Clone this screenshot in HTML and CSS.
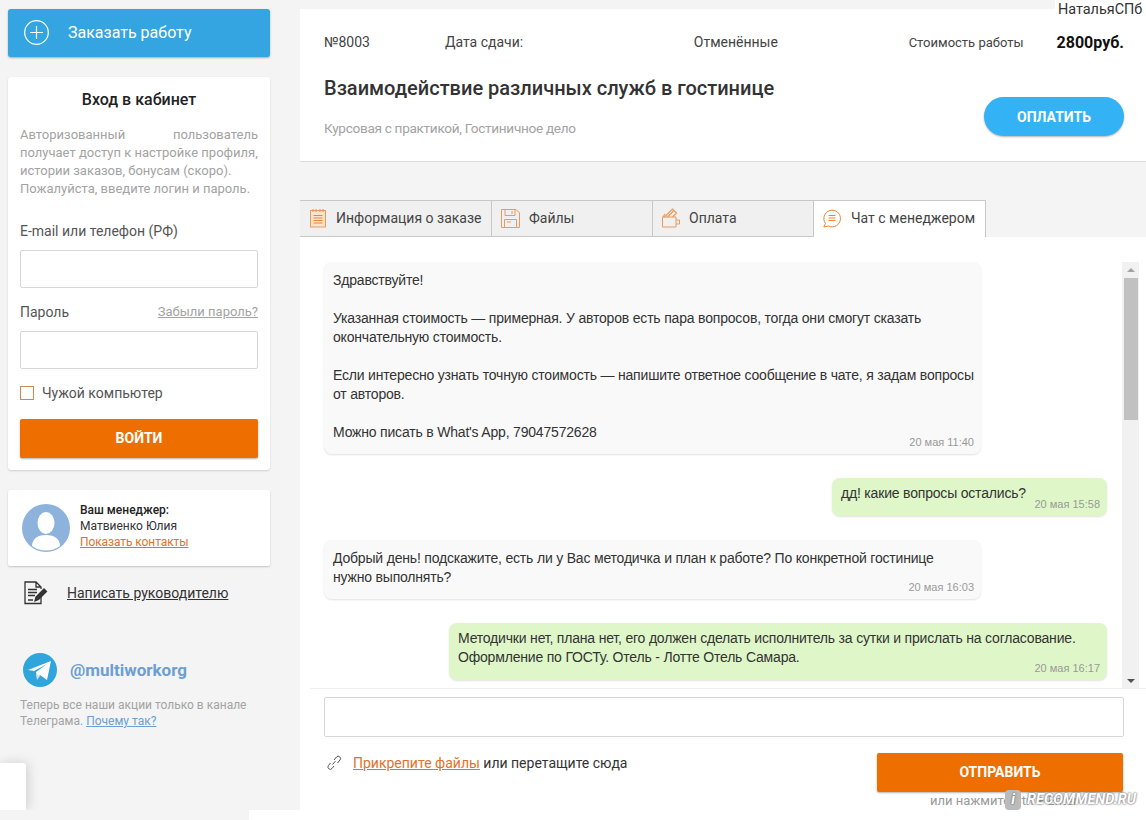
FILE: index.html
```html
<!DOCTYPE html>
<html lang="ru">
<head>
<meta charset="utf-8">
<title>Заказ №8003</title>
<link rel="stylesheet" href="styles.css">
</head>
<body>
<div class="page">

<div class="sidebar">
	<a class="order_btn">
		<svg width="25" height="25" viewBox="0 0 25 25" fill="none" stroke="#fff" stroke-width="1.2"><circle cx="12.500" cy="12.500" r="11.800"/><path d="M12.500 6v13M6 12.500h13"/></svg>
		<span>Заказать работу</span>
	</a>

	<div class="login_box">
		<div class="login_title">Вход в кабинет</div>
		<p class="login_text">Авторизованный пользователь получает доступ к настройке профиля,<br>истории заказов, бонусам (скоро).<br>Пожалуйста, введите логин и пароль.</p>
		<div class="field_label">E-mail или телефон (РФ)</div>
		<div class="field_input"></div>
		<div class="field_label pass_row"><span>Пароль</span><a class="forgot">Забыли пароль?</a></div>
		<div class="field_input"></div>
		<div class="check_row"><span class="check_box"></span>Чужой компьютер</div>
		<a class="login_btn">ВОЙТИ</a>
	</div>

	<div class="manager_box">
		<svg class="avatar" width="48" height="48" viewBox="0 0 48 48"><circle cx="24" cy="24" r="24" fill="#8db3dc"/><ellipse cx="24" cy="19" rx="8.500" ry="11" fill="#fff"/><path d="M10 42c0-8 7-11 14-11s14 3 14 11a24 24 0 0 1-28 0z" fill="#fff"/></svg>
		<div class="manager_text">
			<b>Ваш менеджер:</b>
			<div>Матвиенко Юлия</div>
			<a class="contacts">Показать контакты</a>
		</div>
	</div>

	<div class="write_row">
		<svg width="26" height="26" viewBox="0 0 26 26" fill="none" stroke="#333" stroke-width="1.300"><path d="M18 16v7.500H2V2h11l5 5v2M13 2v5h5M5 9.500h9M5 12.500h9M5 15.500h7M5 20h5"/><path d="M12 21l1-4 8-8 2.500 2.500-8 8z" fill="#333"/></svg>
		<a>Написать руководителю</a>
	</div>

	<div class="tg_row">
		<svg width="34" height="34" viewBox="0 0 34 34"><circle cx="17" cy="17" r="17" fill="#2fa5dc"/><path d="M5 17l23-9-4 19-7-5-3 3-1-6 11-8-13 7z" fill="#fff"/><path d="M13 21l1 6 3-4z" fill="#c8dfee"/></svg>
		<span class="tg_name">@multiworkorg</span>
	</div>
	<p class="tg_text">Теперь все наши акции только в канале Телеграма. <a>Почему так?</a></p>
</div>

<div class="content">
	<div class="order_head">
		<div class="head_top">
			<span class="order_num">№8003</span>
			<span class="order_date">Дата сдачи:</span>
			<span class="order_status">Отменённые</span>
			<span class="price_label">Стоимость работы</span>
			<span class="price">2800руб.</span>
		</div>
		<div class="head_bottom">
			<div>
				<div class="order_title">Взаимодействие различных служб в гостинице</div>
				<div class="order_type">Курсовая с практикой, Гостиничное дело</div>
			</div>
			<a class="pay_btn">ОПЛАТИТЬ</a>
		</div>
	</div>

	<div class="tabs">
		<div class="tab tab_info">
			<svg width="18" height="20" viewBox="0 0 18 20" fill="#fbe3cc" stroke="#ec9a5c"><rect x="1.500" y="2.500" width="15" height="16.500"/><path d="M4 1v3M7 1v3M11 1v3M14 1v3" stroke-width="1.200"/><path d="M4.500 7.500h9M4.500 10h9M4.500 12.500h9M4.500 15h9" stroke="#e8853a"/></svg>
			Информация о заказе
		</div>
		<div class="tab tab_files">
			<svg width="19" height="20" viewBox="0 0 19 20" fill="none" stroke="#ec9a5c"><path d="M.5 1.500h14.500l3.500 3.500v14.500H.5z"/><path d="M4 1.500v6h10v-6M11 3v3M3.500 19.500v-8h12v8M6 14h4"/></svg>
			Файлы
		</div>
		<div class="tab tab_pay">
			<svg width="18" height="20" viewBox="0 0 18 20" fill="none" stroke="#ec9a5c"><path d="M.5 9h13.500v10H.5zM14 12h3.500v4H14"/><path d="M2.500 9l8-8 4 4-4 4M5.500 9l6-6M1 9l2-3" stroke-width="1.200"/></svg>
			Оплата
		</div>
		<div class="tab tab_chat">
			<svg width="18" height="20" viewBox="0 0 18 20" fill="none" stroke="#e8853a"><path d="M2.500 15.500a8.300 8.300 0 1 1 3 2.500L.8 19z"/><path d="M5.500 7.500h7M5.500 10h7M5.500 12.500h7"/></svg>
			Чат с менеджером
		</div>
	</div>

	<div class="chat_panel">
		<div class="chat_wrap">
			<div class="messages">
				<div class="msg msg_in msg_first">
					<p>Здравствуйте!</p>
					<p>Указанная стоимость — примерная. У авторов есть пара вопросов, тогда они смогут сказать окончательную стоимость.</p>
					<p>Если интересно узнать точную стоимость — напишите ответное сообщение в чате, я задам вопросы от авторов.</p>
					<p>Можно писать в What's App, 79047572628</p>
					<span class="msg_time">20 мая 11:40</span>
				</div>
				<div class="msg msg_out msg_short">
					<p>дд! какие вопросы остались?</p>
					<span class="msg_time">20 мая 15:58</span>
				</div>
				<div class="msg msg_in msg_third">
					<p>Добрый день! подскажите, есть ли у Вас методичка и план к работе? По конкретной гостинице нужно выполнять?</p>
					<span class="msg_time">20 мая 16:03</span>
				</div>
				<div class="msg msg_out msg_fourth">
					<p>Методички нет, плана нет, его должен сделать исполнитель за сутки и прислать на согласование. Оформление по ГОСТу. Отель - Лотте Отель Самара.</p>
					<span class="msg_time">20 мая 16:17</span>
				</div>
			</div>
			<div class="scrollbar">
				<span class="arrow_up"></span>
				<div class="scroll_track"><div class="scroll_thumb"></div></div>
				<span class="arrow_down"></span>
			</div>
		</div>

		<div class="send_area">
			<div class="send_input"></div>
			<div class="send_row">
				<div class="attach">
					<svg width="16" height="16" viewBox="0 0 16 16" fill="none" stroke="#555"><path d="M6.500 9.500l3-3.500M4.500 8l-2 2.500a2.300 2.300 0 0 0 3.500 3l2-2.500M8 5l2.500-3a2.300 2.300 0 0 1 3.500 3l-2.500 3"/></svg>
					<span><a>Прикрепите файлы</a> или перетащите сюда</span>
				</div>
				<div class="send_right">
					<a class="send_btn">ОТПРАВИТЬ</a>
					<div class="send_hint">или нажмите Ctrl + Enter</div>
				</div>
			</div>
		</div>
	</div>
</div>
</div>

<div class="user_name">НатальяСПб</div>
<div class="corner_left"></div>
<div class="corner_strip"></div>
<div class="watermark"><span class="wm_badge">i</span>RECOMMEND.RU</div>
</body>
</html>
```

FILE: styles.css
```css
html, body {
	height: 820px;
	overflow: hidden;
}

body {
	margin: 0;
	background: #f4f4f4;
	color: #333;
	font-family: Roboto, Arial, sans-serif;
	font-size: 14px;
	position: relative;
}

a {
	cursor: pointer;
}

.page {
	display: flex;
	align-items: flex-start;
	padding-top: 9px;
}

.sidebar {
	width: 262px;
	margin-left: 8px;
	flex-shrink: 0;
}

.order_btn {
	display: flex;
	align-items: center;
	gap: 19px;
	height: 48px;
	box-sizing: border-box;
	padding: 0 0 1px 16px;
	background: #34a5e0;
	border-radius: 3px;
	box-shadow: 0 1px 2px rgba(0, 0, 0, 0.3);
	color: #fff;
	font-size: 16px;
}

.login_box {
	margin-top: 20px;
	padding: 13px 12px 12px;
	height: 393px;
	box-sizing: border-box;
	background: #fff;
	border-radius: 3px;
	box-shadow: 0 1px 2px rgba(0, 0, 0, 0.15);
}

.login_title {
	text-align: center;
	font-size: 16px;
	font-weight: 500;
	line-height: 20px;
	color: #222;
}

.login_text {
	margin: 16px 0 0;
	font-size: 13px;
	line-height: 18px;
	color: #a3a3a3;
	text-align: justify;
}

.field_label {
	margin-top: 23px;
	font-size: 14px;
	line-height: 20px;
	color: #555;
}

.pass_row {
	display: flex;
	justify-content: space-between;
	align-items: center;
	margin-top: 14px;
}

.forgot {
	font-size: 13px;
	color: #a3a3a3;
	text-decoration: underline;
}

.field_input {
	height: 36px;
	margin-top: 9px;
	background: #fff;
	border: 1px solid #d8d8d8;
	border-radius: 2px;
}

.check_row {
	display: flex;
	align-items: center;
	gap: 8px;
	margin-top: 15px;
	line-height: 18px;
	color: #555;
}

.check_box {
	width: 12px;
	height: 12px;
	border: 1px solid #c98a50;
}

.login_btn {
	display: block;
	margin-top: 17px;
	height: 39px;
	line-height: 38px;
	background: #ee6f00;
	border-radius: 2px;
	box-shadow: 0 1px 2px rgba(0, 0, 0, 0.3);
	color: #fff;
	font-weight: 700;
	text-align: center;
}

.manager_box {
	display: flex;
	align-items: center;
	gap: 10px;
	margin-top: 20px;
	height: 76px;
	padding-left: 14px;
	background: #fff;
	border-radius: 2px;
	box-shadow: 0 1px 2px rgba(0, 0, 0, 0.2);
}

.manager_text {
	padding-bottom: 4px;
	font-size: 12px;
	line-height: 16px;
	color: #333;
}

.manager_text b {
	font-weight: 500;
	color: #222;
}

.contacts {
	color: #e0722a;
	letter-spacing: -0.1px;
	text-decoration: underline;
}

.write_row {
	display: flex;
	align-items: center;
	gap: 18px;
	margin-top: 14px;
	padding-left: 15px;
}

.write_row a {
	color: #333;
	text-decoration: underline;
}

.tg_row {
	display: flex;
	align-items: center;
	gap: 13px;
	margin-top: 47px;
	padding-left: 15px;
}

.tg_name {
	font-size: 17px;
	font-weight: 700;
	color: #6d9fd2;
}

.tg_text {
	margin: 10px 0 0 12px;
	width: 240px;
	font-size: 12px;
	line-height: 16px;
	color: #a3a3a3;
}

.tg_text a {
	color: #6d9fd2;
	text-decoration: underline;
}

.content {
	width: 846px;
	margin-left: 30px;
	flex-shrink: 0;
}

.order_head {
	height: 153px;
	box-sizing: border-box;
	padding: 23px 22px 0 24px;
	background: #fff;
	border-bottom: 1px solid #ddd;
}

.head_top {
	display: flex;
	align-items: center;
	height: 20px;
	color: #444;
}

.order_num {
	width: 121px;
}

.order_date {
	width: 249px;
}

.order_status {
	width: 215px;
}

.price_label {
	width: 148px;
	font-size: 13px;
}

.price {
	font-size: 16px;
	font-weight: 700;
	color: #111;
}

.head_bottom {
	display: flex;
	justify-content: space-between;
	margin-top: 23px;
}

.order_title {
	font-size: 20px;
	font-weight: 500;
	line-height: 26px;
	color: #333;
}

.order_type {
	margin-top: 19px;
	font-size: 13.600px;
	letter-spacing: -0.3px;
	line-height: 16px;
	color: #a3a3a3;
}

.pay_btn {
	width: 140px;
	height: 39px;
	margin-top: 22px;
	line-height: 41px;
	background: #33b3f5;
	border-radius: 20px;
	box-shadow: 0 1px 2px rgba(0, 0, 0, 0.3);
	color: #fff;
	font-weight: 700;
	text-align: center;
}

.tabs {
	display: flex;
	height: 37px;
	margin-top: 38px;
}

.tab {
	display: flex;
	align-items: center;
	gap: 9px;
	box-sizing: border-box;
	padding: 0 0 2px 9px;
	background: #f0f0f0;
	border: 1px solid #c8c8c8;
	border-left: 0;
	color: #444;
}

.tab_info {
	width: 192px;
}

.tab_files {
	width: 161px;
}

.tab_pay {
	width: 161px;
}

.tab_chat {
	width: 172px;
	gap: 10px;
	background: #fff;
	border-bottom: 0;
}

.chat_panel {
	height: 583px;
	background: #fff;
}

.chat_wrap {
	display: flex;
	justify-content: space-between;
	height: 452px;
	margin-left: 10px;
	border-bottom: 1px solid #eee;
	box-sizing: border-box;
	overflow: hidden;
}

.messages {
	width: 783px;
	margin-left: 14px;
	padding-top: 25px;
}

.msg {
	box-sizing: border-box;
	padding: 9px;
	border-radius: 8px;
	font-family: "Liberation Sans", Arial, sans-serif;
	font-size: 14px;
	letter-spacing: -0.19px;
	line-height: 19px;
	color: #333;
	position: relative;
}

.msg p {
	margin: 0 0 19px;
}

.msg p:last-of-type {
	margin-bottom: 0;
}

.msg_in {
	background: #f9f9f9;
	box-shadow: 0 1px 2px rgba(0, 0, 0, 0.12);
}

.msg_out {
	padding-top: 6px;
	background: #dff7c8;
	box-shadow: 0 1px 2px rgba(0, 0, 0, 0.12);
	margin-left: auto;
}

.msg_first {
	width: 657px;
	height: 192px;
	padding-right: 6px;
}

.msg_short {
	width: 275px;
	height: 38px;
	margin-top: 24px;
}

.msg_third {
	width: 657px;
	height: 59px;
	margin-top: 24px;
}

.msg_fourth {
	width: 658px;
	height: 57px;
	margin-top: 24px;
}

.msg_time {
	position: absolute;
	right: 7px;
	bottom: 5px;
	font-size: 11px;
	letter-spacing: 0;
	line-height: 14px;
	color: #999;
	white-space: nowrap;
}

.scrollbar {
	display: flex;
	flex-direction: column;
	align-items: center;
	width: 17px;
	height: 427px;
	margin: 25px 7px 0 0;
	background: #f1f1f1;
}

.scroll_track {
	flex: 1;
	width: 14px;
}

.scroll_thumb {
	height: 142px;
	background: #c1c1c1;
}

.arrow_up, .arrow_down {
	width: 0;
	height: 0;
	margin: 6px 0;
	border-left: 4px solid transparent;
	border-right: 4px solid transparent;
}

.arrow_up {
	border-bottom: 4px solid #a3a3a3;
}

.arrow_down {
	border-top: 4px solid #505050;
}

.send_area {
	padding: 8px 22px 0 24px;
}

.send_input {
	height: 38px;
	background: #fff;
	border: 1px solid #d8d8d8;
	border-radius: 2px;
}

.send_row {
	display: flex;
	justify-content: space-between;
	margin-top: 16px;
}

.attach {
	display: flex;
	align-items: center;
	gap: 11px;
	height: 20px;
	padding: 0 0 0 2px;
	color: #333;
}

.attach a {
	color: #e0722a;
	text-decoration: underline;
}

.send_right {
	width: 246px;
	margin-right: 1px;
}

.send_btn {
	display: block;
	height: 39px;
	line-height: 39px;
	background: #ee6f00;
	border-radius: 2px;
	box-shadow: 0 1px 2px rgba(0, 0, 0, 0.3);
	color: #fff;
	font-weight: 700;
	text-align: center;
}

.send_hint {
	margin: 1px 0 0 53px;
	font-size: 13px;
	line-height: 16px;
	color: #999;
	white-space: nowrap;
}

.user_name {
	position: absolute;
	top: 0;
	right: 0;
	width: 91px;
	box-sizing: border-box;
	padding: 1px 0 0 3px;
	height: 19px;
	background: #fff;
	font-size: 14.400px;
	line-height: 18px;
	color: #333;
	white-space: nowrap;
}

.corner_left {
	position: absolute;
	left: 0;
	top: 763px;
	width: 26px;
	height: 47px;
	background: #fff;
	border-radius: 0 3px 0 0;
	box-shadow: 2px 0 12px rgba(0, 0, 0, 0.15);
	clip-path: inset(-20px -20px 0 0);
}

.corner_strip {
	position: absolute;
	left: 249px;
	right: 0;
	top: 810px;
	height: 10px;
	background: #fff;
}

.watermark {
	position: absolute;
	left: 1005px;
	top: 790px;
	font-size: 14.500px;
	font-weight: 700;
	font-style: italic;
	line-height: 20px;
	color: #fff;
	text-shadow: 0 0 2px #777, 0 0 2px #777;
	white-space: nowrap;
}

.wm_badge {
	display: inline-block;
	width: 16px;
	height: 20px;
	margin-right: 6px;
	background: #bbb;
	border-radius: 4px;
	text-align: center;
}
```
